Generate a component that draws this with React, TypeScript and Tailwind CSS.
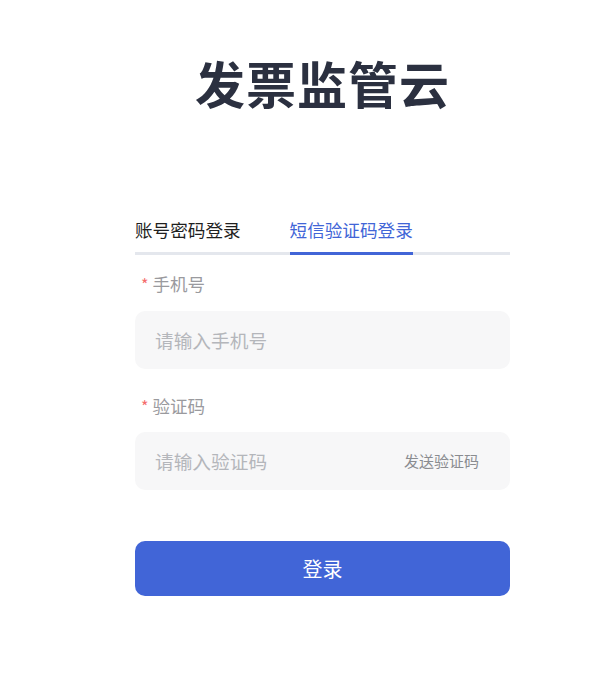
import * as React from "react";

const font = { fontFamily: '"Noto Sans CJK SC", "Noto Sans", sans-serif' };

export default function App() {
  const [tab, setTab] = React.useState<"pwd" | "sms">("sms");

  return (
    <div className="min-h-[674px] w-full bg-white" style={font}>
      <div className="ml-[135px] w-[375px] pt-[54px]">
        <h1 className="text-center text-[50px] font-bold leading-[56px] tracking-[1px] text-[#2b3040]">
          发票监管云
        </h1>

        {/* tabs */}
        <div className="mt-[107px] flex gap-[49px] border-b-[3px] border-[#e4e7ed]">
          <button
            onClick={() => setTab("pwd")}
            className={
              "relative pb-[9px] text-[17.6px] leading-[26px] " +
              (tab === "pwd" ? "text-[#4165d7]" : "text-[#1f1f1f]")
            }
          >
            账号密码登录
            {tab === "pwd" && (
              <span className="absolute left-0 right-0 -bottom-[3px] h-[3px] bg-[#4165d7]" />
            )}
          </button>
          <button
            onClick={() => setTab("sms")}
            className={
              "relative pb-[9px] text-[17.6px] leading-[26px] " +
              (tab === "sms" ? "text-[#4165d7]" : "text-[#1f1f1f]")
            }
          >
            短信验证码登录
            {tab === "sms" && (
              <span className="absolute left-0 right-0 -bottom-[3px] h-[3px] bg-[#4165d7]" />
            )}
          </button>
        </div>

        {/* phone */}
        <div className="mt-[18px] flex items-center pl-[6px] text-[17.5px] leading-[22px] text-[#9a9a9e]">
          <span className="mr-[4px] text-[16px] text-[#f56c6c]">*</span>
          手机号
        </div>
        <div className="mt-[16px] flex h-[58px] items-center rounded-[10px] bg-[#f7f7f8] px-[20px]">
          <input
            placeholder="请输入手机号"
            className="w-full bg-transparent text-[18.7px] text-[#333] outline-none placeholder:text-[#b4b6bb]"
          />
        </div>

        {/* code */}
        <div className="mt-[26px] flex items-center pl-[6px] text-[17.5px] leading-[22px] text-[#9a9a9e]">
          <span className="mr-[4px] text-[16px] text-[#f56c6c]">*</span>
          验证码
        </div>
        <div className="mt-[15px] flex h-[58px] items-center rounded-[10px] bg-[#f7f7f8] pl-[20px] pr-[31px]">
          <input
            placeholder="请输入验证码"
            className="min-w-0 flex-1 bg-transparent text-[18.7px] text-[#333] outline-none placeholder:text-[#b4b6bb]"
          />
          <button className="shrink-0 text-[15px] text-[#8a8c90]">发送验证码</button>
        </div>

        <button className="mt-[51px] h-[55px] w-full rounded-[10px] bg-[#4165d7] text-[20px] text-white">
          登录
        </button>
      </div>
    </div>
  );
}
